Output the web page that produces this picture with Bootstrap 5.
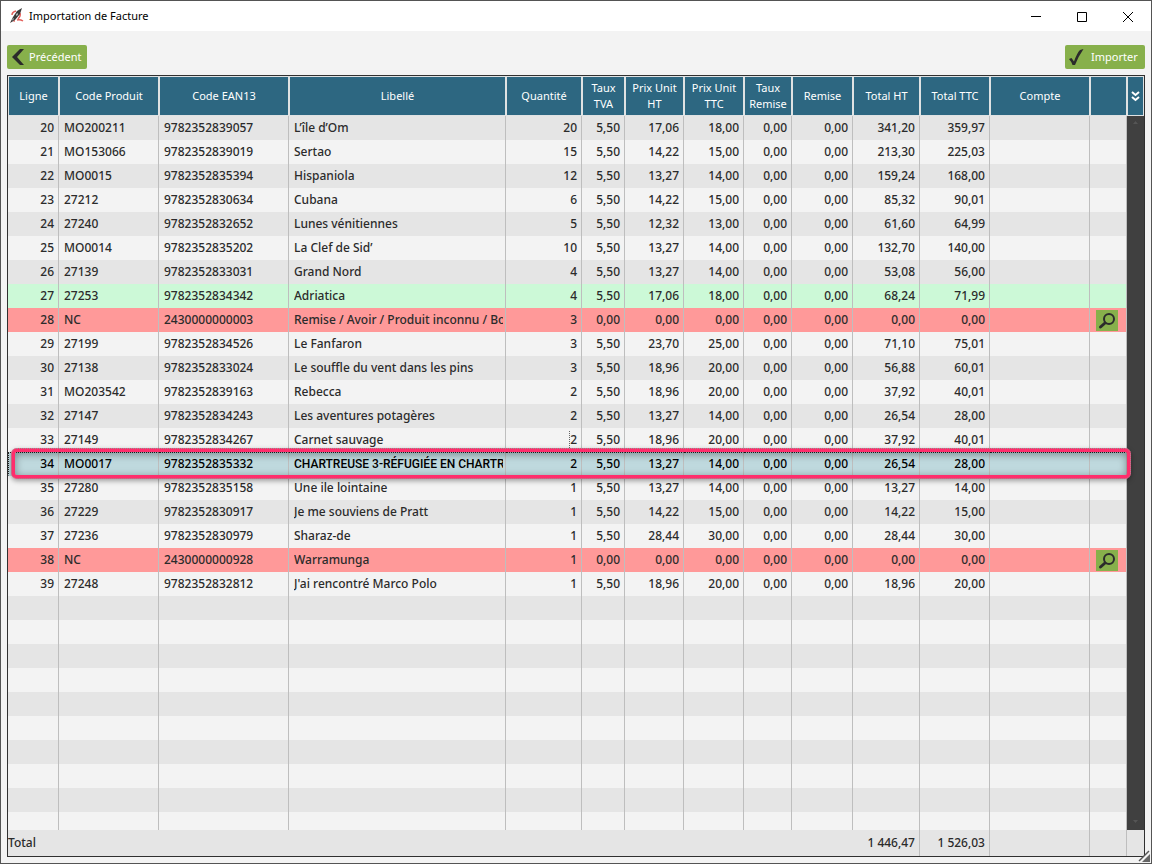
<!DOCTYPE html>
<html lang="fr">
<head>
<meta charset="utf-8">
<meta name="viewport" content="width=device-width, initial-scale=1">
<title>Importation de Facture</title>
<link href="https://cdn.jsdelivr.net/npm/bootstrap@5.3.0/dist/css/bootstrap.min.css" rel="stylesheet">
<style>
  body { font-family: "Noto Sans", "Open Sans", sans-serif; font-size: 12px; line-height: 16px; color: #2b2b2b; background: #f3f3f3; }
  .app-window { border: 1px solid #545454; min-height: 100vh; }
  .title-bar { height: 30px; background: #fff; color: #000; font-family: "Noto Sans", "Open Sans", sans-serif; font-size: 11px; padding-left: 8px; }
  .win-btn { width: 46px; height: 30px; border: 0; background: none; padding: 0; color: #000; }
  .tool-row { padding: 14px 6px 6px; }
  .act-btn { --bs-btn-padding-x: 0; --bs-btn-padding-y: 0; --bs-btn-border-radius: 2px; --bs-btn-border-width: 0;
    --bs-btn-color: #fff; --bs-btn-bg: #87b04b; --bs-btn-hover-bg: #79a03f; --bs-btn-hover-color: #fff;
    --bs-btn-font-size: 11px; --bs-btn-line-height: 16px; width: 80px; height: 24px; }
  .grid-frame { margin: 0 6px 6px; border: 1px solid #303030; }
  .lines { width: 100%; table-layout: fixed; border-collapse: separate; border-spacing: 0; }
  .lines th { height: 40px; padding: 0; background: #2d6781; color: #fff; font-size: 11px; font-weight: 400; text-align: center; border: 1px solid #dfe2e3; }
  .lines td { height: 24px; padding: 0 4px 0 5px; white-space: nowrap; overflow: hidden; border-right: 1px solid #bebebe; font-weight: 500; text-align: right; }
  .lines td.txt { text-align: left; }
  .lines td.clip { padding-right: 0; }
  .clip span { display: block; overflow: hidden; margin-right: 2px; }
  .lines tbody tr { background: #f3f3f3; }
  .lines tbody tr:nth-child(odd) { background: #e5e5e5; }
  .lines tbody tr.is-new { background: #ccf9d7; }
  .lines tbody tr.is-unknown { background: #ff9999; }
  .lines tbody tr.is-picked { background: #bfd9de; color: #000; position: relative; z-index: 1; }
  .lines tbody tr:last-child td { height: 18px; }
  .is-picked td { border-top: 1px dotted #222; border-bottom: 1px solid transparent; }
  .is-picked td:first-child { overflow: visible; border-left: 1px dotted #222; }
  .is-picked .clip { font-family: Roboto, "Noto Sans", sans-serif; }
  .lines td.scroll-cell { background: #404040; border: 0; padding: 0; height: 1px; }
  .highlight { position: absolute; inset: -4px 13px -3px 3px; border: 4px solid #ff2d6c; border-radius: 6px; outline: 1px dotted #999; outline-offset: -1px;
    box-shadow: 0 2px 5px rgba(0,0,0,.35), inset 0 2px 8px rgba(0,0,0,.4); pointer-events: none; }
  .has-caret { border-left: 1px dotted #666; }
  .find-btn { width: 22px; height: 21px; padding: 0; border: 0; background: #87b04b; display: block; margin: 1px 0 0 1px; }
  .lines tfoot td { height: 26px; background: #e5e5e5; border: 0; }
  .lines tfoot .ruled { border-right: 1px solid #bebebe; }
  .lines tfoot td:first-child { padding-left: 0; }
  .grip { position: absolute; right: 1px; bottom: 1px; }
</style>
</head>
<body>
<div class="app-window d-flex flex-column position-relative">
  <header class="title-bar d-flex align-items-center">
    <svg width="16" height="16" viewBox="0 0 16 16" aria-hidden="true">
      <path d="M7 3Q3 4 3 7M4 11Q3 13 6 13M9 11Q12 8 11 5M8 12Q11 11 14 13" fill="none" stroke="#e4605b" stroke-width="1.500"/>
      <path d="M13 0L11 6L6 12L1 15L4 9L8 3Z" fill="#3a3a3a"/><path d="M7 6l2-1v2l-2 1zM3 11l2-1-1 3z" fill="#aaa"/>
    </svg>
    <span class="ps-1 me-auto">Importation de Facture</span>
    <button class="win-btn" aria-label="Réduire"><svg width="10" height="10" viewBox="0 0 10 10"><path d="M0 4.500H10" stroke="#000"/></svg></button>
    <button class="win-btn" aria-label="Agrandir"><svg width="10" height="10" viewBox="0 0 10 10"><path d="M.5 .5H9.500V9.500H.5Z" fill="none" stroke="#000"/></svg></button>
    <button class="win-btn" aria-label="Fermer"><svg width="10" height="10" viewBox="0 0 10 10"><path d="M0 0L10 10M10 0L0 10" stroke="#000" fill="none"/></svg></button>
  </header>

  <div class="tool-row d-flex justify-content-between">
    <button class="btn act-btn d-flex align-items-center" type="button">
      <svg width="22" height="24" viewBox="0 0 22 24"><path d="M17 4L13 4L5 12L13 20L17 20L10 12Z" fill="#2b2b2b"/></svg>
      <span>Précédent</span>
    </button>
    <button class="btn act-btn d-flex align-items-center" type="button">
      <svg width="26" height="24" viewBox="0 0 26 24"><path d="M4 14L6.500 13L9 16.500Q12 8 15 5L18.500 4Q13 12 10 20L7.500 20Q6 16 4 14Z" fill="#2b2b2b"/></svg>
      <span>Importer</span>
    </button>
  </div>

  <main class="grid-frame">
    <table class="lines">
      <colgroup id="cols"></colgroup>
      <thead><tr id="heads"></tr></thead>
      <tbody id="rows"></tbody>
      <tfoot>
        <tr>
          <td colspan="10" class="txt">Total</td>
          <td class="ruled">1 446,47</td>
          <td class="ruled">1 526,03</td>
          <td class="ruled"></td>
          <td class="ruled"></td>
          <td></td>
        </tr>
      </tfoot>
    </table>
  </main>
  <svg class="grip" width="12" height="12" viewBox="0 0 12 12" aria-hidden="true"><path d="M0 12L12 0V12Z" fill="#f3f3f3"/><path d="M1 11L11 1" stroke="#555" stroke-width="1.500"/><path d="M4 12L12 4V12Z" fill="#666"/></svg>
</div>

<script>
  // The label column has no width: it takes what the others leave.
  const columns = [
    ['Ligne', 51], ['Code Produit', 100], ['Code EAN13', 130], ['Libellé', 0], ['Quantité', 76],
    ['Taux<br>TVA', 43], ['Prix Unit<br>HT', 59], ['Prix Unit<br>TTC', 60], ['Taux<br>Remise', 48],
    ['Remise', 61], ['Total HT', 67], ['Total TTC', 70], ['Compte', 100], ['', 37],
    ['<svg width="9" height="12" viewBox="0 0 9 12" aria-label="Plus"><path d="M1 1L4.500 4L8 1M1 6L4.500 9L8 6" fill="none" stroke="#fff" stroke-width="2"/></svg>', 17]
  ];
  // line | product | EAN | label | qty | VAT | net unit | gross unit | net total | gross total | state
  const data = `20|MO200211|9782352839057|L’île d’Om|20|5,50|17,06|18,00|341,20|359,97
21|MO153066|9782352839019|Sertao|15|5,50|14,22|15,00|213,30|225,03
22|MO0015|9782352835394|Hispaniola|12|5,50|13,27|14,00|159,24|168,00
23|27212|9782352830634|Cubana|6|5,50|14,22|15,00|85,32|90,01
24|27240|9782352832652|Lunes vénitiennes|5|5,50|12,32|13,00|61,60|64,99
25|MO0014|9782352835202|La Clef de Sid’|10|5,50|13,27|14,00|132,70|140,00
26|27139|9782352833031|Grand Nord|4|5,50|13,27|14,00|53,08|56,00
27|27253|9782352834342|Adriatica|4|5,50|17,06|18,00|68,24|71,99|is-new
28|NC|2430000000003|Remise / Avoir / Produit inconnu / Bo|3|0,00|0,00|0,00|0,00|0,00|is-unknown
29|27199|9782352834526|Le Fanfaron|3|5,50|23,70|25,00|71,10|75,01
30|27138|9782352833024|Le souffle du vent dans les pins|3|5,50|18,96|20,00|56,88|60,01
31|MO203542|9782352839163|Rebecca|2|5,50|18,96|20,00|37,92|40,01
32|27147|9782352834243|Les aventures potagères|2|5,50|13,27|14,00|26,54|28,00
33|27149|9782352834267|Carnet sauvage|2|5,50|18,96|20,00|37,92|40,01|has-focus
34|MO0017|9782352835332|CHARTREUSE 3-RÉFUGIÉE EN CHARTR|2|5,50|13,27|14,00|26,54|28,00|is-picked
35|27280|9782352835158|Une ile lointaine|1|5,50|13,27|14,00|13,27|14,00
36|27229|9782352830917|Je me souviens de Pratt|1|5,50|14,22|15,00|14,22|15,00
37|27236|9782352830979|Sharaz-de|1|5,50|28,44|30,00|28,44|30,00
38|NC|2430000000928|Warramunga|1|0,00|0,00|0,00|0,00|0,00|is-unknown
39|27248|9782352832812|J'ai rencontré Marco Polo|1|5,50|18,96|20,00|18,96|20,00`.split('\n').map(l => l.split('|'));

  document.getElementById('cols').innerHTML = columns.map(c => c[1] ? `<col style="width:${c[1]}px">` : '<col>').join('');
  document.getElementById('heads').innerHTML = columns.map(c => `<th scope="col">${c[0]}</th>`).join('');

  const find = '<button class="find-btn" type="button" aria-label="Rechercher"><svg class="d-block" width="22" height="21" viewBox="0 0 22 21"><circle cx="13" cy="9" r="5" fill="none" stroke="#2b2b2b" stroke-width="2"/><path d="M9 13L4.500 17" stroke="#2b2b2b" stroke-width="3" stroke-linecap="round"/></svg></button>';
  const arrow = d => `<svg width="17" height="14" viewBox="0 0 17 14"><path d="${d}" fill="#555"/></svg>`;
  const blankRows = 10, total = data.length + blankRows;
  const html = [];
  for (let i = 0; i < total; i++) {
    const d = data[i];
    const scroll = i ? '' : `<td class="scroll-cell" rowspan="${total}"><div class="h-100 d-flex flex-column justify-content-between">${arrow('M6 8L8.500 5L11 8Z')}${arrow('M6 4L8.500 7L11 4Z')}</div></td>`;
    if (!d) { html.push('<tr>' + '<td></td>'.repeat(14) + '</tr>'); continue; }
    const [line, code, ean, label, qty, vat, net, gross, tNet, tGross, state = ''] = d;
    const mark = state === 'is-picked' ? '<span class="highlight"></span>' : '';
    const amount = state === 'has-focus' ? `<span class="has-caret">${qty}</span>` : qty;
    html.push(`<tr class="${state}"><td>${line}${mark}</td><td class="txt">${code}</td><td class="txt">${ean}</td>
      <td class="txt clip"><span>${label}</span></td><td>${amount}</td><td>${vat}</td><td>${net}</td><td>${gross}</td>
      <td>0,00</td><td>0,00</td><td>${tNet}</td><td>${tGross}</td><td></td><td>${state === 'is-unknown' ? find : ''}</td>${scroll}</tr>`);
  }
  document.getElementById('rows').innerHTML = html.join('');
</script>
<script src="https://cdn.jsdelivr.net/npm/bootstrap@5.3.0/dist/js/bootstrap.bundle.min.js"></script>
</body>
</html>
